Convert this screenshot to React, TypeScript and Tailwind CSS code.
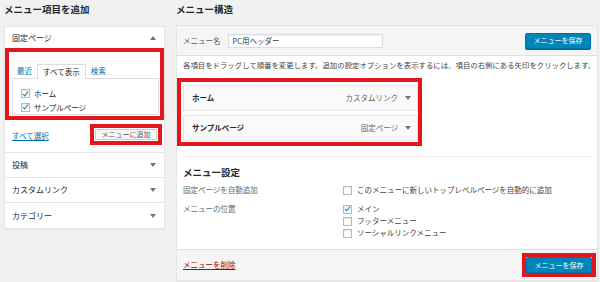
import React from 'react';

const FONT = { fontFamily: '"Noto Sans CJK JP", "Noto Sans", sans-serif' };

const Arrow = ({ up = false }: { up?: boolean }) => (
  <svg width="6" height="4" viewBox="0 0 6 4" className="shrink-0">
    <path d={up ? 'M0 4 L3 0 L6 4 Z' : 'M0 0 L6 0 L3 4 Z'} fill="#72777c" />
  </svg>
);

const Check = ({ checked = false }: { checked?: boolean }) => (
  <span className="w-[9px] h-[9px] shrink-0 border border-[#b4b9be] bg-white flex items-center justify-center shadow-[inset_0_1px_2px_rgba(0,0,0,0.1)]">
    {checked && (
      <svg width="8" height="8" viewBox="0 0 8 8">
        <path d="M1.2 4.2 L3.1 6.1 L6.9 1.3" stroke="#1e8cbe" strokeWidth="1.3" fill="none" />
      </svg>
    )}
  </span>
);

const AccordionRow = ({ title, last = false }: { title: string; last?: boolean }) => (
  <div
    className={`h-[25px] flex items-center justify-between pl-[7px] pr-[8px] text-[8px] text-[#23282d] ${
      last ? '' : 'border-b border-[#e5e5e5]'
    }`}
  >
    <span>{title}</span>
    <Arrow />
  </div>
);

const MenuItem = ({ title, type }: { title: string; type: string }) => (
  <div className="h-[26px] ml-[2px] bg-[#fafafa] border border-[#e5e5e5] flex items-center justify-between pl-[8px] pr-[6px]">
    <span className="text-[7.5px] font-bold text-[#23282d]">{title}</span>
    <span className="flex items-center gap-[7px] text-[7.5px] text-[#666]">
      {type}
      <Arrow />
    </span>
  </div>
);

const SaveButton = () => (
  <button className="block w-[66px] h-[16px] bg-[#0085ba] border border-[#0073aa] rounded-[2px] text-white text-[7px] leading-none shadow-[0_1px_0_#006799]">
    メニューを保存
  </button>
);

export default function App() {
  return (
    <div
      className="w-[600px] h-[282px] bg-[#f1f1f1] overflow-hidden flex gap-[11px] pl-[4px]"
      style={FONT}
    >
      {/* Left column */}
      <div className="w-[161px] shrink-0 flex flex-col">
        <h2 className="pt-[3px] h-[26px] text-[9.5px] leading-[13px] font-bold text-[#23282d]">
          メニュー項目を追加
        </h2>
        <div className="bg-white border border-[#e5e5e5] shadow-[0_1px_1px_rgba(0,0,0,0.04)]">
          <div className="h-[21px] flex items-center justify-between pl-[7px] pr-[8px] text-[8px] text-[#23282d]">
            <span>固定ページ</span>
            <Arrow up />
          </div>

          <div className="border-[4px] border-[#e3151d] pt-[11px] pl-[3px] pr-[1px] pb-[1px] overflow-hidden">
            <div className="flex items-end h-[15px] text-[7.5px]">
              <span className="px-[5px] text-[#0073aa] leading-[14px]">最近</span>
              <span className="px-[5px] leading-[14px] h-[15px] border border-b-0 border-[#ddd] bg-white text-[#23282d] relative top-px">
                すべて表示
              </span>
              <span className="px-[5px] text-[#0073aa] leading-[14px]">検索</span>
            </div>
            <div className="h-[37px] border border-[#ddd] bg-white pt-[8px] pl-[8px] flex flex-col text-[7.5px] text-[#23282d]">
              <label className="h-[14px] flex items-center gap-[4px]">
                <Check checked />
                ホーム
              </label>
              <label className="h-[14px] flex items-center gap-[4px]">
                <Check checked />
                サンプルページ
              </label>
            </div>
          </div>

          <div className="h-[33px] flex items-start justify-between pt-[4px] pl-[7px] pr-[2px] border-b border-[#e5e5e5]">
            <span className="text-[7.5px] text-[#0073aa] underline leading-[12px] mt-[6px]">すべて選択</span>
            <div className="flex border-[4px] border-[#e3151d] pl-[1px] pr-[1px] pt-[1px] pb-[1px]">
              <button className="block w-[62px] h-[11px] bg-[#f7f7f7] border border-[#ccc] text-[7px] leading-none text-[#555]">
                メニューに追加
              </button>
            </div>
          </div>

          <AccordionRow title="投稿" />
          <AccordionRow title="カスタムリンク" />
          <AccordionRow title="カテゴリー" last />
        </div>
      </div>

      {/* Right column */}
      <div className="w-[422px] shrink-0 flex flex-col">
        <h2 className="pt-[3px] h-[25px] text-[9.5px] leading-[13px] font-bold text-[#23282d]">
          メニュー構造
        </h2>
        <div className="bg-white border border-[#e5e5e5] shadow-[0_1px_1px_rgba(0,0,0,0.04)] flex flex-col">
          <div className="h-[30px] bg-[#f5f5f5] border-b border-[#dfdfdf] flex items-center justify-between pl-[6px] pr-[6px]">
            <div className="flex items-center gap-[7px]">
              <span className="text-[7.5px] text-[#555]">メニュー名</span>
              <div className="w-[155px] h-[14px] bg-white border border-[#ddd] shadow-[inset_0_1px_2px_rgba(0,0,0,0.07)] flex items-center pl-[4px] text-[7.5px] text-[#32373c]">
                PC用ヘッダー
              </div>
            </div>
            <SaveButton />
          </div>

          <div className="bg-white">
            <p className="pt-[3px] pl-[6px] text-[7.4px] leading-[12px] text-[#444] whitespace-nowrap">
              各項目をドラッグして順番を変更します。追加の設定オプションを表示するには、項目の右側にある矢印をクリックします。
            </p>

            <div className="mt-[7px] w-[245px] border-[4px] border-[#e3151d] pt-[3px] pb-[1px] flex flex-col gap-[4px]">
              <MenuItem title="ホーム" type="カスタムリンク" />
              <MenuItem title="サンプルページ" type="固定ページ" />
            </div>

            <div className="mx-[5px] mt-[10px] border-t border-[#eee] pl-[1px] pb-[10px]">
              <h3 className="mt-[9px] text-[9.5px] leading-[13px] font-bold text-[#23282d]">メニュー設定</h3>
              <div className="mt-[5px] flex text-[7.5px] leading-[12px]">
                <span className="w-[160px] text-[#666]">固定ページを自動追加</span>
                <label className="flex items-center gap-[5px] text-[#444]">
                  <Check />
                  このメニューに新しいトップレベルページを自動的に追加
                </label>
              </div>
              <div className="mt-[7px] flex text-[7.5px] leading-[12px]">
                <span className="w-[160px] text-[#666]">メニューの位置</span>
                <div className="flex flex-col">
                  <label className="flex items-center gap-[5px] text-[#444]">
                    <Check checked />
                    メイン
                  </label>
                  <label className="flex items-center gap-[5px] text-[#444]">
                    <Check />
                    フッターメニュー
                  </label>
                  <label className="flex items-center gap-[5px] text-[#444]">
                    <Check />
                    ソーシャルリンクメニュー
                  </label>
                </div>
              </div>
            </div>
          </div>

          <div className="h-[31px] bg-[#f5f5f5] border-t border-[#dfdfdf] flex items-center justify-between pl-[6px] pr-px">
            <span className="text-[7.5px] text-[#a00] underline">メニューを削除</span>
            <div className="flex border-[4px] border-[#e3151d]">
              <SaveButton />
            </div>
          </div>
        </div>
      </div>
    </div>
  );
}
